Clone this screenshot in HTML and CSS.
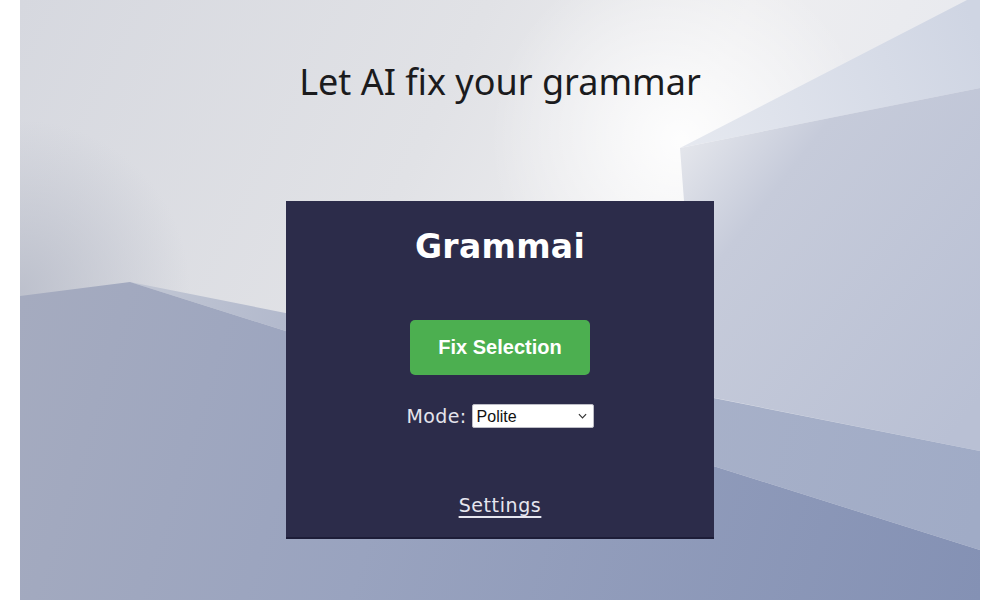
FILE: index.html
```html
<!DOCTYPE html>
<html lang="en">
<head>
<meta charset="utf-8">
<title>Grammai</title>
<link rel="stylesheet" href="styles.css">
</head>
<body>
<div class="stage">
  <svg class="backdrop" viewBox="0 0 960 600" preserveAspectRatio="none" aria-hidden="true">
    <defs>
      <linearGradient id="gBase" x1="0" y1="0" x2="1" y2="0.3">
        <stop offset="0" stop-color="#d6d8df"/>
        <stop offset="0.45" stop-color="#e1e2e6"/>
        <stop offset="0.7" stop-color="#eeeef0"/>
        <stop offset="1" stop-color="#e6e8ee"/>
      </linearGradient>
      <radialGradient id="gGlow" cx="660" cy="140" r="190" gradientUnits="userSpaceOnUse">
        <stop offset="0" stop-color="#ffffff" stop-opacity="0.9"/>
        <stop offset="1" stop-color="#ffffff" stop-opacity="0"/>
      </radialGradient>
      <radialGradient id="gLeftDark" cx="0" cy="290" r="170" gradientUnits="userSpaceOnUse">
        <stop offset="0" stop-color="#b8bcc9" stop-opacity="0.85"/>
        <stop offset="1" stop-color="#b8bcc9" stop-opacity="0"/>
      </radialGradient>
      <linearGradient id="gWedge" x1="660" y1="148" x2="960" y2="40" gradientUnits="userSpaceOnUse">
        <stop offset="0" stop-color="#e6e9f0"/>
        <stop offset="1" stop-color="#cfd5e3"/>
      </linearGradient>
      <linearGradient id="gRight" x1="655" y1="160" x2="960" y2="400" gradientUnits="userSpaceOnUse">
        <stop offset="0" stop-color="#e3e5eb"/>
        <stop offset="0.25" stop-color="#c6cbda"/>
        <stop offset="1" stop-color="#b9c0d4"/>
      </linearGradient>
      <linearGradient id="gBand" x1="110" y1="282" x2="960" y2="500" gradientUnits="userSpaceOnUse">
        <stop offset="0" stop-color="#c2c7d4"/>
        <stop offset="0.2" stop-color="#b1b8cc"/>
        <stop offset="1" stop-color="#a0abc6"/>
      </linearGradient>
      <linearGradient id="gLow" x1="0" y1="300" x2="960" y2="600" gradientUnits="userSpaceOnUse">
        <stop offset="0" stop-color="#a5abbf"/>
        <stop offset="0.4" stop-color="#99a3bf"/>
        <stop offset="1" stop-color="#8491b4"/>
      </linearGradient>
    </defs>
    <rect x="0" y="0" width="960" height="600" fill="url(#gBase)"/>
    <rect x="0" y="0" width="960" height="600" fill="url(#gGlow)"/>
    <rect x="0" y="100" width="200" height="300" fill="url(#gLeftDark)"/>
    <polygon points="660,148 947,0 960,0 960,88" fill="url(#gWedge)"/>
    <polygon points="660,148 960,88 960,451 580,375 664,201" fill="url(#gRight)"/>
    <polygon points="110,282 960,451 960,550" fill="url(#gBand)"/>
    <polygon points="110,282 960,550 960,600 0,600 0,296" fill="url(#gLow)"/>
  </svg>

  <main class="content">
    <h1 class="headline">Let AI fix your grammar</h1>
    <section class="card">
      <h2 class="brand">Grammai</h2>
      <button class="fix-btn" type="button">Fix Selection</button>
      <div class="mode-row">
        <label class="mode-label" for="mode">Mode:</label>
        <div class="select-wrap">
          <select id="mode" class="mode-select">
            <option>Polite</option>
            <option>Formal</option>
            <option>Casual</option>
          </select>
          <svg class="chevron" viewBox="0 0 10 6" aria-hidden="true"><path d="M1 1 L5 5 L9 1" fill="none" stroke="#333" stroke-width="1.3"/></svg>
        </div>
      </div>
      <a class="settings-link" href="#">Settings</a>
    </section>
  </main>
</div>
</body>
</html>
```

FILE: styles.css
```css
html, body {
  margin: 0;
  padding: 0;
  background: #ffffff;
}

.stage {
  position: relative;
  margin: 0 20px;
  height: 600px;
  overflow: hidden;
}

.backdrop {
  position: absolute;
  inset: 0;
  width: 100%;
  height: 100%;
  display: block;
}

.content {
  position: relative;
  z-index: 1;
  display: flex;
  flex-direction: column;
  align-items: center;
}

.headline {
  margin: 0;
  padding-top: 61px;
  font-family: "Noto Sans", "Open Sans", sans-serif;
  font-weight: 400;
  font-size: 36px;
  line-height: 42px;
  color: #1b1b1d;
}

.card {
  box-sizing: border-box;
  margin-top: 98px;
  width: 428px;
  height: 338px;
  background: #2c2c4a;
  border-bottom: 2px solid #1d1d38;
  display: flex;
  flex-direction: column;
  align-items: center;
  padding-top: 26px;
}

.brand {
  margin: 0;
  font-family: "DejaVu Sans", sans-serif;
  font-weight: 700;
  font-size: 33px;
  line-height: 40px;
  letter-spacing: 0.3px;
  color: #ffffff;
}

.fix-btn {
  margin-top: 53px;
  width: 180px;
  height: 55px;
  border: none;
  border-radius: 5px;
  background: #4caf50;
  color: #ffffff;
  font-family: "Liberation Sans", Arial, sans-serif;
  font-weight: 700;
  font-size: 20px;
  cursor: pointer;
}

.mode-row {
  margin-top: 29px;
  display: flex;
  align-items: center;
  gap: 5px;
  height: 24px;
}

.mode-label {
  font-family: "DejaVu Sans", sans-serif;
  font-size: 19px;
  letter-spacing: 0.4px;
  color: #e4e4ec;
}

.select-wrap {
  position: relative;
  width: 122px;
  height: 24px;
}

.mode-select {
  appearance: none;
  -webkit-appearance: none;
  box-sizing: border-box;
  width: 100%;
  height: 100%;
  margin: 0;
  padding: 0 20px 0 4px;
  border: 1px solid #bdbdc6;
  border-radius: 2px;
  background: #ffffff;
  color: #111111;
  font-family: "Liberation Sans", Arial, sans-serif;
  font-size: 16px;
}

.chevron {
  position: absolute;
  right: 7px;
  top: 9px;
  width: 9px;
  height: 6px;
  pointer-events: none;
}

.settings-link {
  margin-top: 63px;
  font-family: "DejaVu Sans", sans-serif;
  font-size: 19px;
  line-height: 28px;
  letter-spacing: 0.6px;
  color: #e6e6ef;
  text-decoration: underline;
  text-decoration-thickness: 2px;
  text-underline-offset: 4px;
}
```
